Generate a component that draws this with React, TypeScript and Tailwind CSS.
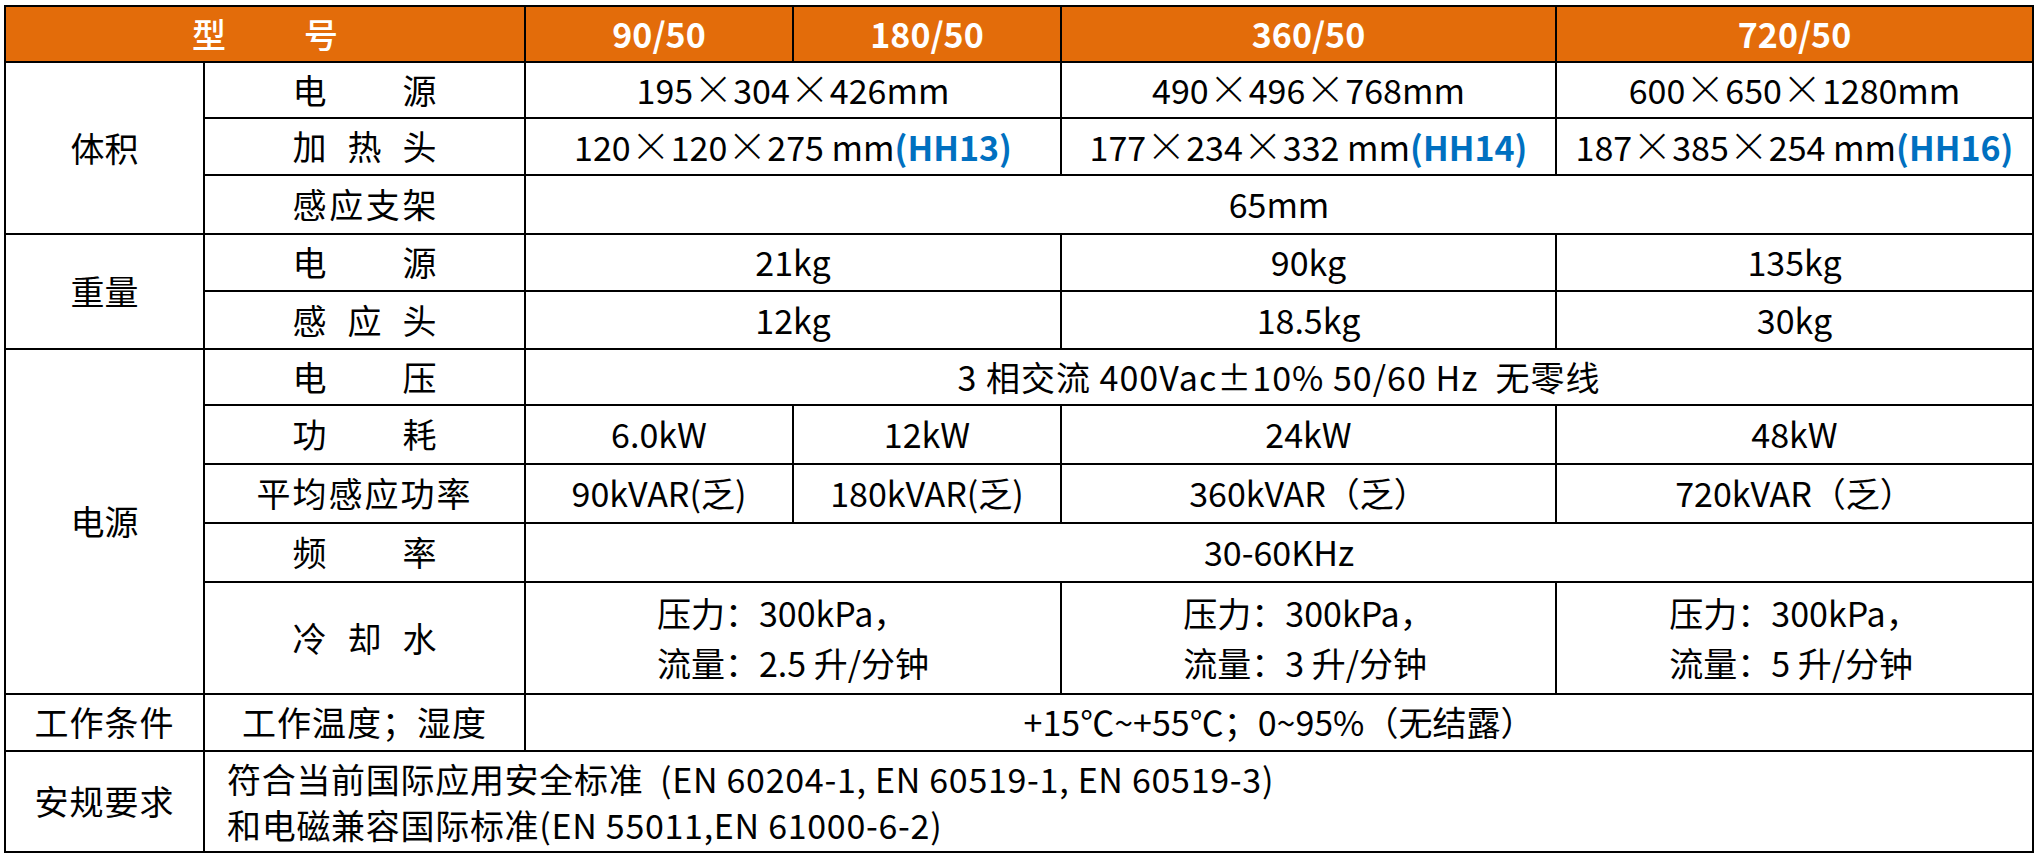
import type {ReactNode} from "react"

// shared cell look: thin black grid, centred text
const cell = "border-2 border-black text-center align-middle p-0"

// the wide multiplication cross used in the size rows
function X() {
    return <span className="inline-block w-[40px] text-center text-[40px] leading-none font-light">×</span>
}

// spread the characters of a row label over a four-character box
function Label({text}: {text: string}) {
    return (
        <div className="mx-auto flex w-[144px] justify-between">
            {text.split("").map((c, i) => (
                <span key={i}>{c}</span>
            ))}
        </div>
    )
}

function Size({a, b, c, tag}: {a: string; b: string; c: string; tag?: string}) {
    return (
        <span className="whitespace-nowrap">
            {a}<X />{b}<X />{c}
            {tag && <span className="font-bold text-[#0070c0]">({tag})</span>}
        </span>
    )
}

function Water({flow}: {flow: string}) {
    return (
        <div className="inline-block text-left leading-[50px]">
            <div>压力：300kPa，</div>
            <div>流量：{flow} 升/分钟</div>
        </div>
    )
}

function Td({children, span, className = ""}: {children?: ReactNode; span?: number; className?: string}) {
    return (
        <td colSpan={span} className={`${cell} ${className}`}>
            {children}
        </td>
    )
}

export default function App() {
    return (
        <div className="min-h-screen bg-white pl-[4px] pt-[5px] font-['Noto_Sans_CJK_SC',sans-serif] text-[34px] leading-[1.3] text-black">
            <table className="w-[2028px] table-fixed border-collapse">
                <colgroup>
                    <col className="w-[199px]" />
                    <col className="w-[321px]" />
                    <col className="w-[268px]" />
                    <col className="w-[268px]" />
                    <col className="w-[495px]" />
                    <col className="w-[477px]" />
                </colgroup>
                <thead>
                    {/* model header */}
                    <tr className="h-[56px] bg-[#e36c0a] text-white">
                        <th colSpan={2} className={cell}>
                            <div className="flex justify-center gap-[78px] font-medium">
                                <span>型</span>
                                <span>号</span>
                            </div>
                        </th>
                        <th className={`${cell} font-bold`}>90/50</th>
                        <th className={`${cell} font-bold`}>180/50</th>
                        <th className={`${cell} font-bold`}>360/50</th>
                        <th className={`${cell} font-bold`}>720/50</th>
                    </tr>
                </thead>
                <tbody>
                    {/* volume */}
                    <tr className="h-[56px]">
                        <td rowSpan={3} className={cell}>体积</td>
                        <Td><Label text="电源" /></Td>
                        <Td span={2}><Size a="195" b="304" c="426mm" /></Td>
                        <Td><Size a="490" b="496" c="768mm" /></Td>
                        <Td><Size a="600" b="650" c="1280mm" /></Td>
                    </tr>
                    <tr className="h-[57px]">
                        <Td><Label text="加热头" /></Td>
                        <Td span={2}><Size a="120" b="120" c="275 mm" tag="HH13" /></Td>
                        <Td><Size a="177" b="234" c="332 mm" tag="HH14" /></Td>
                        <Td><Size a="187" b="385" c="254 mm" tag="HH16" /></Td>
                    </tr>
                    <tr className="h-[59px]">
                        <Td><Label text="感应支架" /></Td>
                        <Td span={4}>65mm</Td>
                    </tr>

                    {/* weight */}
                    <tr className="h-[57px]">
                        <td rowSpan={2} className={cell}>重量</td>
                        <Td><Label text="电源" /></Td>
                        <Td span={2}>21kg</Td>
                        <Td>90kg</Td>
                        <Td>135kg</Td>
                    </tr>
                    <tr className="h-[58px]">
                        <Td><Label text="感应头" /></Td>
                        <Td span={2}>12kg</Td>
                        <Td>18.5kg</Td>
                        <Td>30kg</Td>
                    </tr>

                    {/* power supply */}
                    <tr className="h-[56px]">
                        <td rowSpan={5} className={cell}>电源</td>
                        <Td><Label text="电压" /></Td>
                        <Td span={4} className="tracking-[1px]">3 相交流 400Vac±10% 50/60 Hz&nbsp; 无零线</Td>
                    </tr>
                    <tr className="h-[59px]">
                        <Td><Label text="功耗" /></Td>
                        <Td>6.0kW</Td>
                        <Td>12kW</Td>
                        <Td>24kW</Td>
                        <Td>48kW</Td>
                    </tr>
                    <tr className="h-[59px]">
                        <Td className="tracking-[2px]">平均感应功率</Td>
                        <Td>90kVAR(乏)</Td>
                        <Td>180kVAR(乏)</Td>
                        <Td>360kVAR（乏）</Td>
                        <Td>720kVAR（乏）</Td>
                    </tr>
                    <tr className="h-[59px]">
                        <Td><Label text="频率" /></Td>
                        <Td span={4}>30-60KHz</Td>
                    </tr>
                    <tr className="h-[112px]">
                        <Td><Label text="冷却水" /></Td>
                        <Td span={2}><Water flow="2.5" /></Td>
                        <Td><Water flow="3" /></Td>
                        <Td><Water flow="5" /></Td>
                    </tr>

                    {/* working conditions */}
                    <tr className="h-[57px]">
                        <Td className="tracking-[1px]">工作条件</Td>
                        <Td className="tracking-[1px]">工作温度；湿度</Td>
                        <Td span={4}>+15℃~+55℃；0~95%（无结露）</Td>
                    </tr>

                    {/* safety standards */}
                    <tr className="h-[101px]">
                        <Td className="tracking-[1px]">安规要求</Td>
                        <Td span={5} className="!text-left pl-[22px] leading-[46px] tracking-[0.7px]">
                            <div>符合当前国际应用安全标准&nbsp; (EN 60204-1, EN 60519-1, EN 60519-3)</div>
                            <div>和电磁兼容国际标准(EN 55011,EN 61000-6-2)</div>
                        </Td>
                    </tr>
                </tbody>
            </table>
        </div>
    )
}
